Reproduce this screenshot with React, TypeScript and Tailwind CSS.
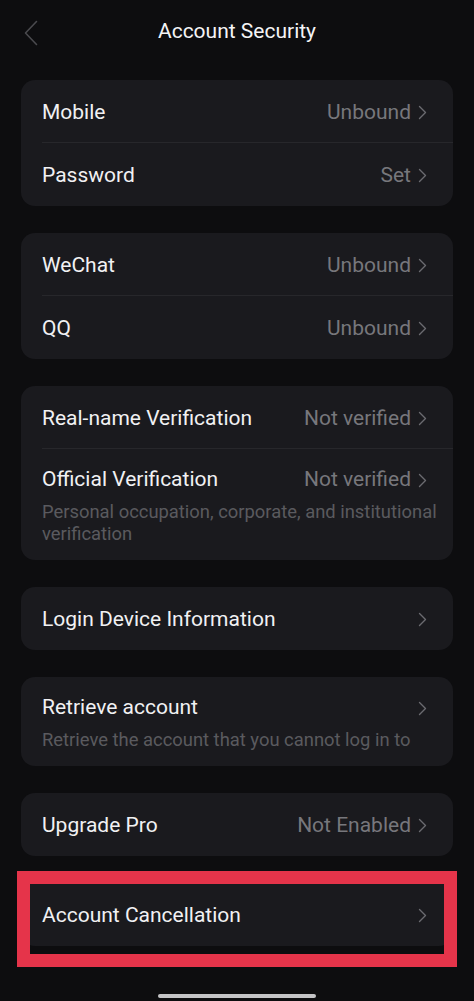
import React from "react";

type Item = {
  title: string;
  value?: string;
  desc?: string;
};

const groups: Item[][] = [
  [
    { title: "Mobile", value: "Unbound" },
    { title: "Password", value: "Set" },
  ],
  [
    { title: "WeChat", value: "Unbound" },
    { title: "QQ", value: "Unbound" },
  ],
  [
    { title: "Real-name Verification", value: "Not verified" },
    {
      title: "Official Verification",
      value: "Not verified",
      desc: "Personal occupation, corporate, and institutional verification",
    },
  ],
  [{ title: "Login Device Information" }],
  [
    {
      title: "Retrieve account",
      desc: "Retrieve the account that you cannot log in to",
    },
  ],
  [{ title: "Upgrade Pro", value: "Not Enabled" }],
  [{ title: "Account Cancellation" }],
];

function Chevron() {
  return (
    <svg width="9" height="15" viewBox="0 0 9 15" fill="none" className="shrink-0">
      <polyline
        points="1.5,1.5 7.5,7.5 1.5,13.5"
        stroke="#6b6b70"
        strokeWidth="1.4"
        strokeLinecap="round"
        strokeLinejoin="round"
      />
    </svg>
  );
}

function Row({ item, last }: { item: Item; last: boolean }) {
  return (
    <div className="relative pl-[21px] pr-[26px]">
      {item.desc ? (
        <div className="pt-[17px] pb-[15px]">
          <div className="flex h-[28px] items-center">
            <span className="flex-1 text-[21px] text-[#f1f1f3]">{item.title}</span>
            {item.value && (
              <span className="mr-[7px] text-[21px] text-[#77777c]">{item.value}</span>
            )}
            <Chevron />
          </div>
          <p className="-mr-[12px] mt-[7px] text-[18.4px] leading-[22px] text-[#5a5a5f]">
            {item.desc}
          </p>
        </div>
      ) : (
        <div className="flex h-[63px] items-center pt-[2px]">
          <span className="flex-1 text-[21px] text-[#f1f1f3]">{item.title}</span>
          {item.value && (
            <span className="mr-[7px] text-[21px] text-[#77777c]">{item.value}</span>
          )}
          <Chevron />
        </div>
      )}
      {!last && (
        <div className="absolute bottom-0 left-[21px] right-0 h-px bg-[#27272b]" />
      )}
    </div>
  );
}

export default function App() {
  return (
    <div
      className="relative h-[1001px] w-full overflow-hidden bg-[#0d0d0f]"
      style={{ fontFamily: "Roboto, 'Noto Sans', sans-serif" }}
    >
      {/* Header */}
      <div className="relative flex h-[64px] items-center justify-center">
        <svg
          width="14"
          height="26"
          viewBox="0 0 14 26"
          fill="none"
          className="absolute left-[24px] top-[20px]"
        >
          <polyline
            points="12.5,1.5 1.5,13 12.5,24.5"
            stroke="#4a4a4e"
            strokeWidth="1.6"
            strokeLinecap="round"
            strokeLinejoin="round"
          />
        </svg>
        <h1 className="text-[21px] text-[#f4f4f6]">Account Security</h1>
      </div>

      {/* Groups */}
      <div className="mt-[16px] flex flex-col gap-[27px] px-[21px]">
        {groups.map((g, i) => (
          <div key={i} className="overflow-hidden rounded-[14px] bg-[#1a1a1e]">
            {g.map((item, j) => (
              <Row key={item.title} item={item} last={j === g.length - 1} />
            ))}
          </div>
        ))}
      </div>

      {/* Highlight annotation */}
      <div className="pointer-events-none absolute left-[17px] top-[871px] h-[96px] w-[440px] border-[13px] border-[#e5344a]" />

      {/* Home indicator */}
      <div className="absolute bottom-[3px] left-[158px] h-[4px] w-[158px] rounded-full bg-[#c4c4c6]" />
    </div>
  );
}
